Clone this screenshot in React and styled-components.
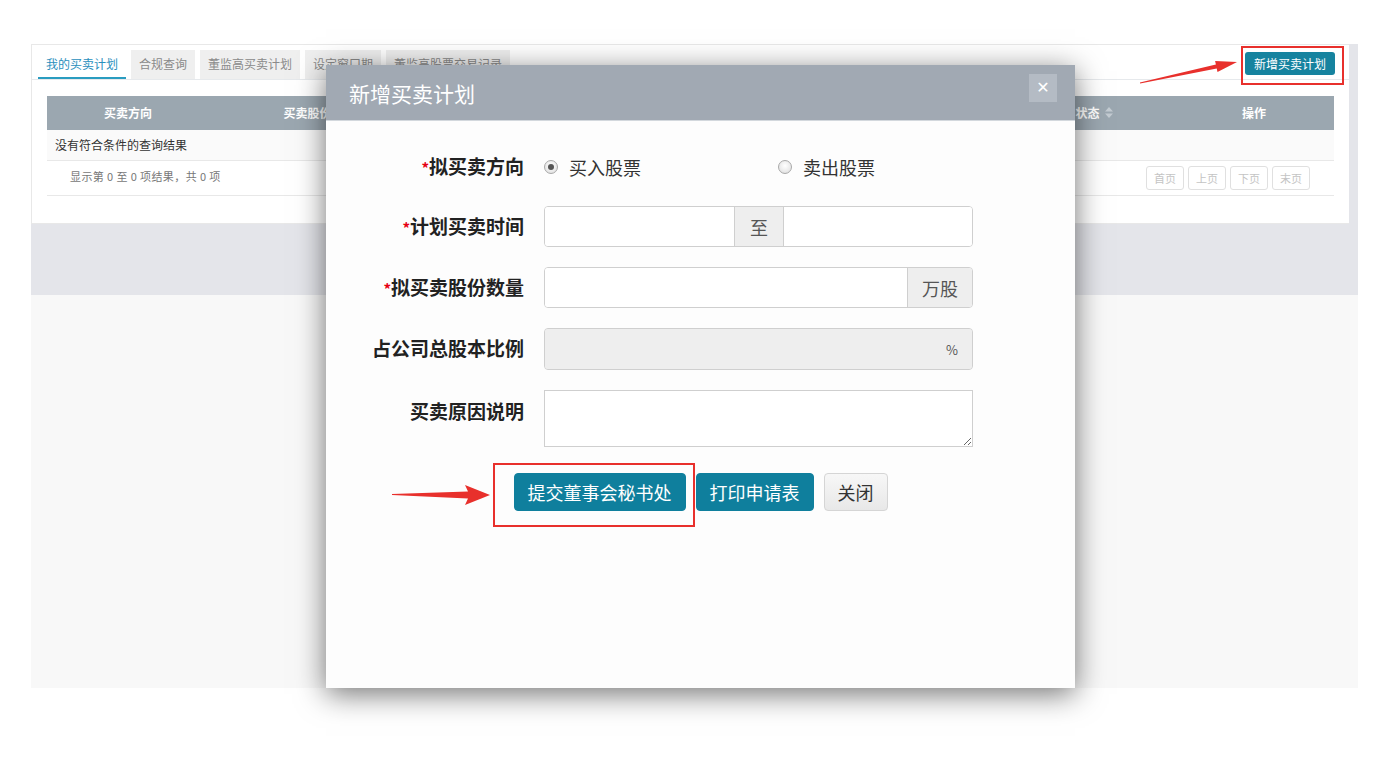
import React from "react";
import styled, { createGlobalStyle } from "styled-components";

const GlobalStyle = createGlobalStyle`
  html, body {
    margin: 0;
    padding: 0;
    background: #ffffff;
  }
  body {
    font-family: "Noto Sans CJK SC", "Noto Sans", sans-serif;
    color: #333;
  }
  * {
    box-sizing: border-box;
  }
`;

const tabs = ["我的买卖计划", "合规查询", "董监高买卖计划", "设定窗口期", "董监高股票交易记录"];
const pager = ["首页", "上页", "下页", "末页"];

const App = () => {
  return (
    <Page>
      <GlobalStyle />
      <Frame>
        <TopArea>
          <Card>
            <TabBar>
              <TabList>
                {tabs.map((t, i) => (
                  <Tab key={t} active={i === 0}>
                    {t}
                  </Tab>
                ))}
              </TabList>
              <SmallPrimary>新增买卖计划</SmallPrimary>
            </TabBar>
            <Table>
              <HeadRow>
                <HeadCell>买卖方向</HeadCell>
                <HeadCell>买卖股份数量</HeadCell>
                <HeadCell>计划买卖时间</HeadCell>
                <HeadCell>
                  交易状态
                  <SortIcon width="8" height="11" viewBox="0 0 8 11">
                    <path d="M4 0 L8 4.5 H0 Z M4 11 L0 6.5 H8 Z" fill="#c3cbd1" />
                  </SortIcon>
                </HeadCell>
                <HeadCell>操作</HeadCell>
              </HeadRow>
              <EmptyRow>没有符合条件的查询结果</EmptyRow>
              <PagerRow>
                <PagerInfo>显示第 0 至 0 项结果，共 0 项</PagerInfo>
                <PagerButtons>
                  {pager.map((p) => (
                    <PagerButton key={p}>{p}</PagerButton>
                  ))}
                </PagerButtons>
              </PagerRow>
            </Table>
          </Card>
        </TopArea>
        <LowerArea />
      </Frame>

      <Modal>
        <ModalHeader>
          <ModalTitle>新增买卖计划</ModalTitle>
          <CloseButton>✕</CloseButton>
        </ModalHeader>
        <ModalBody>
          <FormRow height={39}>
            <Label required>拟买卖方向</Label>
            <RadioGroup>
              <RadioOption fixed>
                <Radio checked />
                买入股票
              </RadioOption>
              <RadioOption>
                <Radio />
                卖出股票
              </RadioOption>
            </RadioGroup>
          </FormRow>
          <FormRow>
            <Label required>计划买卖时间</Label>
            <InputGroup>
              <Input width="189px" />
              <Addon middle>至</Addon>
              <Input />
            </InputGroup>
          </FormRow>
          <FormRow>
            <Label required>拟买卖股份数量</Label>
            <InputGroup>
              <Input />
              <Addon>万股</Addon>
            </InputGroup>
          </FormRow>
          <FormRow height={42}>
            <Label>占公司总股本比例</Label>
            <InputGroup disabled>
              <Input disabled />
              <Addon plain>%</Addon>
            </InputGroup>
          </FormRow>
          <FormRow height={57} top>
            <Label offset={8}>买卖原因说明</Label>
            <TextArea />
          </FormRow>
          <ButtonBar>
            <BigButton primary>提交董事会秘书处</BigButton>
            <BigButton primary>打印申请表</BigButton>
            <BigButton>关闭</BigButton>
          </ButtonBar>
        </ModalBody>
      </Modal>

      <Callout x={1241} y={46} w={103} h={39} />
      <Callout x={493} y={463} w={202} h={64} />
      <ArrowSvg x={1130} y={55} width="115" height="35" viewBox="1130 55 115 35">
        <polygon
          points="1139.9,82.5 1215.9,64.5 1215.1,61.1 1237,62 1217.5,71.9 1216.7,68.5 1140.1,83.5"
          fill="#e8302c"
        />
      </ArrowSvg>
      <ArrowSvg x={385} y={480} width="110" height="30" viewBox="385 480 110 30">
        <polygon
          points="392,494 468,491.5 465,485 490,495 465,505 468,498.5 392,495"
          fill="#e8302c"
        />
      </ArrowSvg>
    </Page>
  );
};

export default App;

const Page = styled.div`
  position: relative;
  width: 1387px;
  height: 769px;
  padding: 44px 0 0 31px;
  overflow: hidden;
`;

const Frame = styled.div`
  width: 1327px;
  display: flex;
  flex-direction: column;
`;

const TopArea = styled.div`
  height: 251px;
  background: #e4e5ea;
  padding-right: 9px;
`;

const LowerArea = styled.div`
  height: 393px;
  background: #f8f8f8;
`;

const Card = styled.div`
  height: 180px;
  background: #ffffff;
  border: 1px solid #e8e8e8;
  border-right: none;
  padding: 0 15px;
`;

const TabBar = styled.div`
  display: flex;
  justify-content: space-between;
  align-items: flex-start;
  height: 35px;
  padding: 5px 14px 0 6px;
  margin: 0 -15px;
  border-bottom: 1px solid #e6e9ec;
`;

const TabList = styled.div`
  display: flex;
  gap: 5px;
`;

const Tab = styled.div`
  height: 29px;
  line-height: 27px;
  padding: 0 8px;
  font-size: 12px;
  color: ${(p) => (p.active ? "#2a8fbd" : "#8a8a8a")};
  background: ${(p) => (p.active ? "#ffffff" : "#efefef")};
  border-bottom: 2px solid ${(p) => (p.active ? "#2a9cc0" : "transparent")};
`;

const SmallPrimary = styled.div`
  margin-top: 2px;
  height: 23px;
  line-height: 23px;
  padding: 0 9px;
  font-size: 12px;
  color: #ffffff;
  background: #16839f;
  border-radius: 3px;
`;

const Table = styled.div`
  margin-top: 16px;
`;

const HeadRow = styled.div`
  display: grid;
  grid-template-columns: 162px 221px 560px 184px 160px;
  height: 34px;
  background: #9ba7b0;
`;

const HeadCell = styled.div`
  display: flex;
  align-items: center;
  justify-content: center;
  gap: 5px;
  font-size: 12px;
  font-weight: 700;
  color: #ffffff;
  padding-bottom: 2px;
`;

const SortIcon = styled.svg`
  display: block;
`;

const EmptyRow = styled.div`
  height: 31px;
  line-height: 30px;
  padding-left: 8px;
  font-size: 12px;
  color: #333;
  background: #fafafa;
  border-bottom: 1px solid #e8e8e8;
`;

const PagerRow = styled.div`
  height: 35px;
  display: flex;
  align-items: center;
  justify-content: space-between;
  padding: 0 24px 0 23px;
  border-bottom: 1px solid #e8e8e8;
`;

const PagerInfo = styled.div`
  font-size: 11px;
  color: #777;
  letter-spacing: 0.4px;
  margin-top: -4px;
`;

const PagerButtons = styled.div`
  display: flex;
  gap: 4px;
`;

const PagerButton = styled.div`
  width: 38px;
  height: 24px;
  line-height: 22px;
  text-align: center;
  font-size: 11px;
  color: #c4c4c4;
  border: 1px solid #e0e0e0;
  border-radius: 3px;
  background: #fff;
`;

const Modal = styled.div`
  position: absolute;
  left: 326px;
  top: 65px;
  width: 749px;
  height: 623px;
  background: #fdfdfd;
  box-shadow: 0 6px 28px rgba(0, 0, 0, 0.55);
  display: flex;
  flex-direction: column;
`;

const ModalHeader = styled.div`
  height: 56px;
  background: #a1a9b3;
  border-bottom: 1px solid #d3d8dd;
  display: flex;
  align-items: flex-start;
  justify-content: space-between;
  padding: 9px 18px 0 23px;
`;

const ModalTitle = styled.div`
  margin-top: 5px;
  font-size: 21px;
  line-height: 28px;
  color: #ffffff;
`;

const CloseButton = styled.div`
  width: 28px;
  height: 28px;
  background: #b4bbc4;
  color: #ffffff;
  font-size: 16px;
  font-weight: 700;
  line-height: 28px;
  text-align: center;
  font-family: "DejaVu Sans", sans-serif;
`;

const ModalBody = styled.div`
  padding-top: 26px;
  display: flex;
  flex-direction: column;
  gap: 20px;
`;

const FormRow = styled.div`
  display: grid;
  grid-template-columns: 198px 429px;
  column-gap: 20px;
  height: ${(p) => p.height || 41}px;
  align-items: ${(p) => (p.top ? "start" : "center")};
`;

const Label = styled.div`
  text-align: right;
  font-size: 19px;
  font-weight: 700;
  color: #222;
  line-height: 26px;
  padding-top: ${(p) => p.offset || 0}px;
  &::before {
    content: ${(p) => (p.required ? '"*"' : '""')};
    color: #e60012;
    font-size: 15px;
    font-weight: 700;
  }
`;

const RadioGroup = styled.div`
  display: flex;
`;

const RadioOption = styled.label`
  flex: none;
  width: ${(p) => (p.fixed ? "234px" : "auto")};
  display: flex;
  align-items: center;
  gap: 11px;
  font-size: 18px;
  color: #333;
`;

const Radio = styled.span`
  width: 14px;
  height: 14px;
  border-radius: 50%;
  border: 1px solid #a9a9a9;
  background: radial-gradient(circle at 50% 40%, #ffffff 0%, #e6e6e6 70%, #d4d4d4 100%);
  display: flex;
  align-items: center;
  justify-content: center;
  &::after {
    content: "";
    width: 6px;
    height: 6px;
    border-radius: 50%;
    background: ${(p) => (p.checked ? "#555" : "transparent")};
  }
`;

const InputGroup = styled.div`
  display: flex;
  height: ${(p) => (p.disabled ? 42 : 41)}px;
  border: 1px solid #cfcfcf;
  border-radius: 4px;
  overflow: hidden;
  background: ${(p) => (p.disabled ? "#eeeeee" : "#ffffff")};
`;

const Input = styled.input`
  border: none;
  outline: none;
  height: 100%;
  flex: ${(p) => (p.width ? "none" : "1")};
  width: ${(p) => p.width || "auto"};
  min-width: 0;
  background: ${(p) => (p.disabled ? "#eeeeee" : "#ffffff")};
  font-size: 16px;
  padding: 0 10px;
`;

const Addon = styled.div`
  display: flex;
  align-items: center;
  justify-content: center;
  padding: ${(p) => (p.plain ? "0 14px 0 10px" : "0 14px")};
  width: ${(p) => (p.middle ? "50px" : "auto")};
  font-size: ${(p) => (p.plain ? "13px" : "18px")};
  color: #555;
  background: #eeeeee;
  border-left: ${(p) => (p.plain ? "none" : "1px solid #cfcfcf")};
  border-right: ${(p) => (p.middle ? "1px solid #cfcfcf" : "none")};
`;

const TextArea = styled.textarea`
  width: 429px;
  height: 57px;
  border: 1px solid #cfcfcf;
  border-radius: 0;
  outline: none;
  background: #fff;
  font-size: 14px;
  resize: both;
`;

const ButtonBar = styled.div`
  margin-top: 6px;
  display: flex;
  justify-content: center;
  gap: 10px;
`;

const BigButton = styled.div`
  height: 38px;
  line-height: 36px;
  padding: 0 13px;
  font-size: 18px;
  border-radius: 4px;
  color: ${(p) => (p.primary ? "#ffffff" : "#333")};
  background: ${(p) => (p.primary ? "#0f7f9d" : "linear-gradient(#f7f7f7, #e8e8e8)")};
  border: 1px solid ${(p) => (p.primary ? "#0f7f9d" : "#d5d5d5")};
`;

const Callout = styled.div.attrs((p) => ({
  style: { left: p.x, top: p.y, width: p.w, height: p.h },
}))`
  position: absolute;
  border: 2px solid #e8302c;
`;

const ArrowSvg = styled.svg`
  position: absolute;
  left: ${(p) => p.x}px;
  top: ${(p) => p.y}px;
  display: block;
`;
